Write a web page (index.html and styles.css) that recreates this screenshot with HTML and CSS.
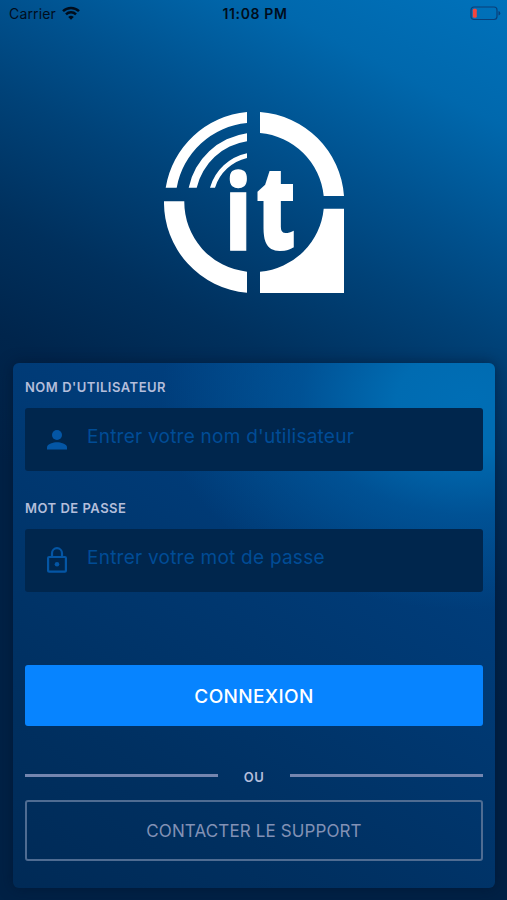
FILE: index.html
```
<!DOCTYPE html>
<html lang="fr">
<head>
<meta charset="utf-8">
<title>Connexion</title>
<link rel="stylesheet" href="styles.css">
</head>
<body>
<div class="status">
<div class="carrier">Carrier
<svg width="18" height="14" viewBox="0 0 18 14"><g fill="none" stroke="#000d1c" stroke-width="2.5"><path d="M1 5.2a11.5 11.5 0 0 1 16 0"/><path d="M4 8.4a7.1 7.1 0 0 1 10 0"/></g><path d="M9 13.8 6.2 11a4 4 0 0 1 5.6 0z" fill="#000d1c"/></svg>
</div>
<div class="time">11:08 PM</div>
<div class="battery">
<svg width="31" height="15" viewBox="0 0 31 15"><rect x="1" y="1" width="26" height="12.5" rx="3" fill="none" stroke="#0a3f78" stroke-width="1.2"/><path d="M28.5 5v4.6q1.8-.6 1.8-2.3T28.5 5z" fill="#0a3f78"/><rect x="2.8" y="2.8" width="4" height="9" rx="1.4" fill="#f4453d"/></svg>
</div>
</div>

<div class="logo">
<svg width="180" height="181" viewBox="0 0 180 181" fill="#fff">
<path d="M83 0A90.5 90.5 0 0 0 1.7 75.7h11A79 79 0 0 1 83 11z"/>
<path d="M83 21.3A69 69 0 0 0 24.7 75.7h8A61 61 0 0 1 83 29.3z"/>
<path d="M83 41.3A49 49 0 0 0 46 75.7h5A44 44 0 0 1 83 46z"/>
<path d="M96 0A90.5 90.5 0 0 1 180 84h-20.3A70 70 0 0 0 96 21z"/>
<path d="M0 89.3A90.5 90.5 0 0 0 83 180.7v-21A70 70 0 0 1 20.3 89.3z"/>
<path d="M96 159.8A70 70 0 0 0 159.7 96.7H180V181H96z"/>
<text class="logo-text" transform="scale(.76 1)" x="81 120" y="138"><tspan class="i">i</tspan><tspan class="t">t</tspan></text>
</svg>
</div>

<form class="card">
<label for="user">NOM D'UTILISATEUR</label>
<div class="field">
<svg width="20" height="20" viewBox="0 0 20 20" fill="#0456a5"><circle cx="10" cy="5" r="5"/><path d="M0 19.5v-2.3c0-3.4 6.6-5 10-5s10 1.6 10 5v2.3z"/></svg>
<input id="user" type="text" placeholder="Entrer votre nom d'utilisateur">
</div>
<label for="pass">MOT DE PASSE</label>
<div class="field">
<svg class="lock" width="20" height="26" viewBox="0 0 20 26" fill="none" stroke="#0456a5" stroke-width="2.2"><rect x="1.1" y="10" width="17.8" height="14.7" rx="1"/><path d="M5 10V6.2a5 5 0 0 1 10 0V10"/><circle cx="10" cy="17.3" r="2.3" fill="#0456a5" stroke="none"/></svg>
<input id="pass" type="password" placeholder="Entrer votre mot de passe">
</div>
<button class="login" type="button">CONNEXION</button>
<div class="or"><span>OU</span></div>
<button class="support" type="button">CONTACTER LE SUPPORT</button>
</form>
</body>
</html>
```
FILE: styles.css
```
* {
  box-sizing: border-box;
}

body {
  margin: 0;
  height: 900px;
  overflow: hidden;
  font-family: Inter, "Liberation Sans", sans-serif;
  background: linear-gradient(207deg, #0072bb 0, #0068ad 11%, #00518e 22%, #004278 30%, #00305d 41%, #00254c 51%, #002145 62%, #002145 100%);
}

.status {
  display: grid;
  grid-template-columns: 1fr auto 1fr;
  align-items: center;
  height: 28px;
  padding: 0 6px 0 9px;
  font-size: 14px;
  color: #000d1c;
}

.carrier {
  display: flex;
  align-items: center;
  gap: 6px;
  margin-top: -1px;
  letter-spacing: 0.15px;
}

.carrier svg {
  margin-top: -2px;
}

.time {
  margin-top: -1px;
  font-weight: 600;
  letter-spacing: 0.65px;
}

.battery {
  display: flex;
  justify-content: flex-end;
}

.battery svg {
  margin-top: -1px;
}

.logo {
  height: 335px;
  padding: 84px 0 0 164px;
}

.logo svg {
  display: block;
}

.logo-text {
  font-family: "Open Sans", sans-serif;
  font-weight: 800;
}

.logo-text .i {
  font-size: 103px;
  stroke: #fff;
  stroke-width: 1.5px;
}

.logo-text .t {
  font-size: 118px;
}

/* Login card */

.card {
  width: 482px;
  height: 525px;
  margin-left: 13px;
  padding: 16px 12px 0;
  border-radius: 6px;
  background:
    radial-gradient(ellipse 310px 210px at 95% 7%, #006eb5 0, #006bb1 24%, rgba(0, 91, 160, 0.65) 55%, rgba(0, 66, 128, 0) 100%),
    linear-gradient(212deg, #00468a 0, #003b77 36%, #003061 75%, #002a56 100%);
  box-shadow: 0 0 14px rgba(0, 18, 44, 0.55);
}

label {
  display: block;
  height: 29px;
  line-height: 17px;
  font-size: 13px;
  font-weight: 600;
  letter-spacing: 0.5px;
  color: #b4bedb;
}

.field {
  display: flex;
  align-items: center;
  gap: 20px;
  height: 63px;
  margin-bottom: 29px;
  padding-left: 22px;
  border-radius: 3px;
  background: #00264d;
}

.field .lock {
  margin-top: -2px;
}

.field input {
  flex: 1;
  height: 30px;
  margin-top: -6px;
  padding: 0;
  border: 0;
  outline: 0;
  background: none;
  font: 19px Inter, sans-serif;
  letter-spacing: 0.24px;
}

.field input::placeholder {
  color: #004c96;
}

button {
  display: block;
  width: 100%;
  height: 61px;
  border-radius: 3px;
  font-family: inherit;
}

.login {
  margin-top: 73px;
  padding-top: 3px;
  border: 0;
  background: #0784ff;
  color: #fff;
  font-size: 19px;
  font-weight: 500;
  letter-spacing: 0.35px;
}

.or {
  display: flex;
  align-items: center;
  gap: 26px;
  height: 20px;
  margin: 41px 0 13px;
  font-size: 13px;
  font-weight: 600;
  letter-spacing: 0.5px;
  color: #b4bedb;
}

.or::before,
.or::after {
  content: "";
  flex: 1;
  height: 3px;
  margin-top: -3px;
  background: #7486b0;
}

.support {
  padding: 0;
  border: 2px solid #4f6c92;
  background: none;
  color: #8291b5;
  font-size: 17px;
  letter-spacing: 0.12px;
}
```
